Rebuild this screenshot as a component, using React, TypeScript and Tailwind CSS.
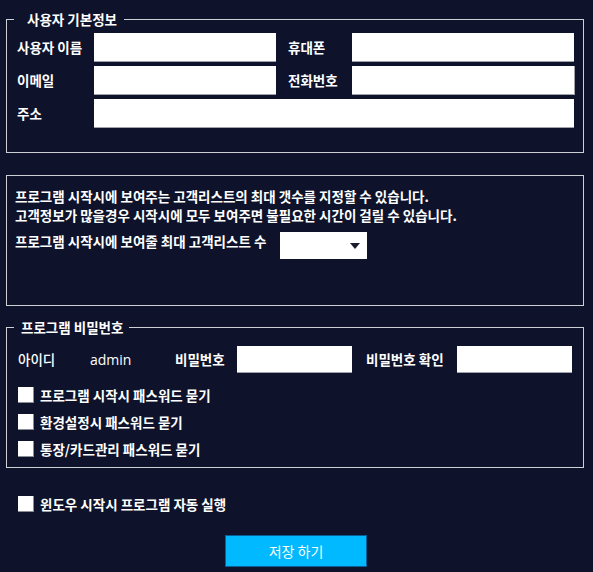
import React from "react";

const font = { fontFamily: '"Noto Sans CJK KR", "Noto Sans", sans-serif' };

function TextBox({ w }: { w: string }) {
  return <div className={`${w} h-[29px] bg-white border-b border-[#9fa1ab]`} />;
}

function Check({ label, className = "" }: { label: string; className?: string }) {
  return (
    <div className={`flex items-center h-[16px] ${className}`}>
      <div className="w-[16px] h-[16px] bg-white border-r border-b border-[#8a8c96] shrink-0" />
      <span className="ml-[6px] leading-[16px] whitespace-nowrap">{label}</span>
    </div>
  );
}

export default function App() {
  return (
    <div
      className="w-[593px] h-[572px] bg-[#0e132b] text-white text-[13.5px] font-bold overflow-hidden pt-[19px] pl-[6px] whitespace-nowrap"
      style={font}
    >
      {/* Group 1 */}
      <div className="relative w-[578px] h-[134px] border border-[#cfd0d6] pt-[13px] pl-[10px]">
        <span className="absolute left-[7px] top-[-10px] h-[19px] leading-[19px] bg-[#0e132b] pl-[13px] pr-[7px]">
          사용자 기본정보
        </span>
        <div className="flex flex-col gap-[4px]">
          <div className="flex items-center">
            <span className="w-[77px]">사용자 이름</span>
            <TextBox w="w-[182px]" />
            <span className="w-[64px] ml-[12px]">휴대폰</span>
            <TextBox w="w-[222px]" />
          </div>
          <div className="flex items-center">
            <span className="w-[77px]">이메일</span>
            <TextBox w="w-[182px]" />
            <span className="w-[64px] ml-[12px]">전화번호</span>
            <div className="w-[223px] h-[29px] bg-white border-b border-r border-[#9fa1ab]" />
          </div>
          <div className="flex items-center">
            <span className="w-[77px]">주소</span>
            <TextBox w="w-[480px]" />
          </div>
        </div>
      </div>

      {/* Group 2 */}
      <div className="w-[578px] h-[131px] mt-[22px] border border-[#cfd0d6] pt-[11px] pl-[8px]">
        <div className="leading-[19px]">프로그램 시작시에 보여주는 고객리스트의 최대 갯수를 지정할 수 있습니다.</div>
        <div className="leading-[19px]">고객정보가 많을경우 시작시에 모두 보여주면 불필요한 시간이 걸릴 수 있습니다.</div>
        <div className="flex items-start mt-[7px]">
          <span className="w-[265px] leading-[19px]">프로그램 시작시에 보여줄 최대 고객리스트 수</span>
          <div className="relative w-[87px] h-[27px] bg-white flex items-center justify-end pr-[7px]">
            <svg width="10" height="6" viewBox="0 0 10 6">
              <path d="M0 0 H10 L5 6 Z" fill="#1a1d2e" />
            </svg>
          </div>
        </div>
      </div>

      {/* Group 3 */}
      <div className="relative w-[578px] h-[141px] mt-[21px] border border-[#cfd0d6] pt-[18px] pl-[11px]">
        <span className="absolute left-[7px] top-[-10px] h-[19px] leading-[19px] bg-[#0e132b] pl-[7px] pr-[6px]">
          프로그램 비밀번호
        </span>
        <div className="flex items-center h-[27px]">
          <span className="w-[72px] font-medium">아이디</span>
          <span className="w-[85px] font-normal text-[14px]" style={{ fontFamily: '"Open Sans", "Noto Sans", sans-serif' }}>admin</span>
          <span className="w-[62px]">비밀번호</span>
          <div className="w-[115px] h-[27px] bg-white border-b border-[#9fa1ab]" />
          <span className="w-[91px] ml-[14px]">비밀번호 확인</span>
          <div className="w-[115px] h-[27px] bg-white border-b border-[#9fa1ab]" />
        </div>
        <div className="flex flex-col gap-[11px] mt-[14px]">
          <Check label="프로그램 시작시 패스워드 묻기" />
          <Check label="환경설정시 패스워드 묻기" />
          <Check label="통장/카드관리 패스워드 묻기" />
        </div>
      </div>

      <div className="pl-[12px] mt-[28px]">
        <Check label="윈도우 시작시 프로그램 자동 실행" />
      </div>

      <div className="flex mt-[23px] pl-[219px]">
        <button className="w-[142px] h-[32px] bg-[#00b9ff] border border-[#0b5f95] text-white text-[14px] font-normal">
          저장 하기
        </button>
      </div>
    </div>
  );
}
